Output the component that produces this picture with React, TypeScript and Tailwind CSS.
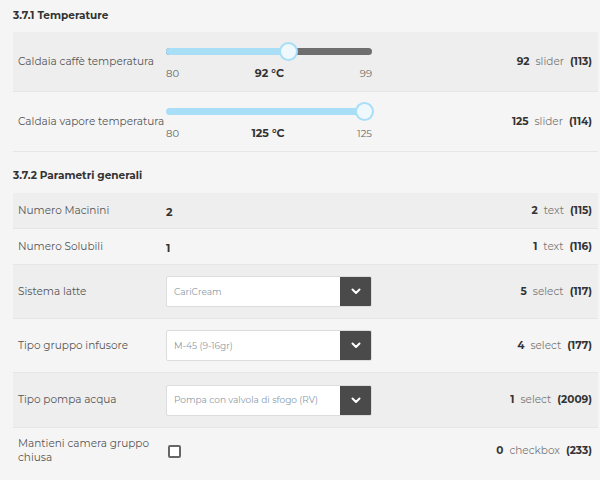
import React from "react";

const font = { fontFamily: "Montserrat, 'Open Sans', 'Noto Sans', sans-serif" };

function Slider({ min, max, value, frac }: { min: number; max: number; value: number; frac: number }) {
  const pct = frac * 100;
  return (
    <div className="w-[206px] flex flex-col">
      <div className="relative h-[19px] flex items-center">
        <div className="w-full h-[7px] rounded-full bg-[#6e6e6e] overflow-hidden">
          <div className="h-full bg-[#a9def7]" style={{ width: `${pct}%` }} />
        </div>
        <div
          className="absolute top-0 w-[19px] h-[19px] rounded-full bg-[#eef8fd] border-2 border-[#a9def7]"
          style={{ left: `calc(${pct}% - ${frac * 17}px)` }}
        />
      </div>
      <div className="flex justify-between items-end mt-[4px] text-[10px] text-[#666]">
        <span>{min}</span>
        <span className="font-bold text-[11px] text-[#333]">{value} °C</span>
        <span>{max}</span>
      </div>
    </div>
  );
}

function Select({ text }: { text: string }) {
  return (
    <div className="w-[206px] h-[31px] flex rounded-[2px] border border-[#dcdcdc] bg-white overflow-hidden">
      <div className="flex-1 flex items-center pl-[7px] text-[9px] text-[#8c9aa6]">{text}</div>
      <div className="w-[31px] h-full bg-[#4a4a4a] flex items-center justify-center">
        <svg width="10" height="7" viewBox="0 0 10 7">
          <path d="M1.5 1.5 L5 5 L8.5 1.5" stroke="white" strokeWidth="2" fill="none" strokeLinecap="round" strokeLinejoin="round" />
        </svg>
      </div>
    </div>
  );
}

function Right({ v, t, id }: { v: string; t: string; id: string }) {
  return (
    <div className="flex-1 flex justify-end items-center pr-[6px] text-[10.5px]">
      <span className="font-bold text-[#333]">{v}</span>
      <span className="ml-[6px] text-[#777]">{t}</span>
      <span className="ml-[6px] font-bold text-[#333]">{id}</span>
    </div>
  );
}

function Row({
  label,
  control,
  right,
  shaded,
  h,
  last,
}: {
  label: React.ReactNode;
  control: React.ReactNode;
  right: React.ReactNode;
  shaded: boolean;
  h: string;
  last?: boolean;
}) {
  return (
    <div
      className={`flex items-center ${last ? "" : "border-b border-[#e6e6e6]"} ${shaded ? "bg-[#eeeeee]" : "bg-[#f5f5f5]"} ${h}`}
    >
      <div className="w-[153px] pl-[5px] pr-[10px] text-[10.5px] text-[#555] leading-[14px]">{label}</div>
      <div className="w-[206px]">{control}</div>
      {right}
    </div>
  );
}

export default function App() {
  return (
    <div className="w-[600px] h-[480px] bg-[#f5f5f5] pl-[13px] pr-[2px] overflow-hidden" style={font}>
      <div className="h-[32px] flex items-center text-[10.5px] font-bold text-[#333]">3.7.1 Temperature</div>
      <Row
        shaded
        h="h-[60px]"
        label={<span className="whitespace-nowrap">Caldaia caffè temperatura</span>}
        control={<Slider min={80} max={99} value={92} frac={0.6} />}
        right={<Right v="92" t="slider" id="(113)" />}
      />
      <Row
        shaded={false}
        h="h-[60px]"
        label={<span className="whitespace-nowrap">Caldaia vapore temperatura</span>}
        control={<Slider min={80} max={125} value={125} frac={1} />}
        right={<Right v="125" t="slider" id="(114)" />}
      />
      <div className="h-[41px] flex items-center pt-[6px] text-[10.5px] font-bold text-[#333]">3.7.2 Parametri generali</div>
      <Row
        shaded
        h="h-[36px]"
        label="Numero Macinini"
        control={<span className="text-[11px] font-bold text-[#333]">2</span>}
        right={<Right v="2" t="text" id="(115)" />}
      />
      <Row
        shaded={false}
        h="h-[36px]"
        label="Numero Solubili"
        control={<span className="text-[11px] font-bold text-[#333]">1</span>}
        right={<Right v="1" t="text" id="(116)" />}
      />
      <Row
        shaded
        h="h-[54px]"
        label="Sistema latte"
        control={<Select text="CariCream" />}
        right={<Right v="5" t="select" id="(117)" />}
      />
      <Row
        shaded={false}
        h="h-[54px]"
        label="Tipo gruppo infusore"
        control={<Select text="M-45 (9-16gr)" />}
        right={<Right v="4" t="select" id="(177)" />}
      />
      <Row
        shaded
        h="h-[55px]"
        label="Tipo pompa acqua"
        control={<Select text="Pompa con valvola di sfogo (RV)" />}
        right={<Right v="1" t="select" id="(2009)" />}
      />
      <Row
        shaded={false}
        last
        h="h-[46px]"
        label="Mantieni camera gruppo chiusa"
        control={<div className="ml-[2px] w-[13px] h-[13px] rounded-[2px] border-2 border-[#666] bg-white" />}
        right={<Right v="0" t="checkbox" id="(233)" />}
      />
    </div>
  );
}
